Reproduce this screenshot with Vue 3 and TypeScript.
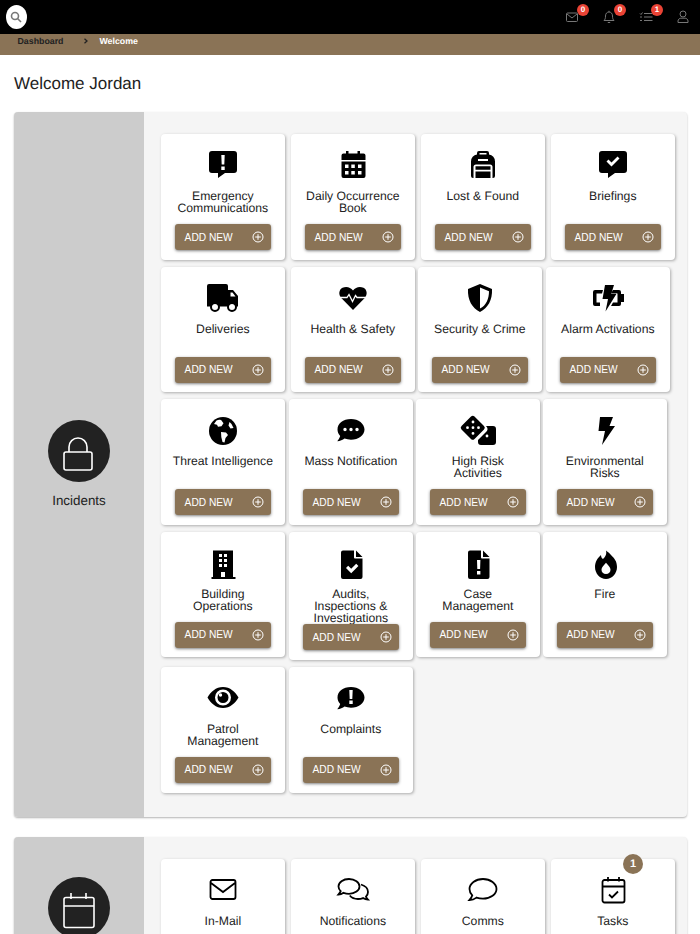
<script setup lang="ts">
interface Icon {
  black?: string
  white?: string
  whiteLine?: string
  line?: string
}

interface Tile {
  label: string
  icon: Icon
  gap?: 's' | 'xs'
  narrow?: boolean
  count?: number
}

const box = 'M5 2h22a3 3 0 0 1 3 3v16a3 3 0 0 1-3 3h-9l-7 5v-5H5a3 3 0 0 1-3-3V5a3 3 0 0 1 3-3z'
const bubble =
  'M16 5C8 5 2.5 9.5 2.5 15.5c0 2.6 1 4.7 2.7 6.4-.6 2.2-2 4-3 5.3 3 0 5.6-1.3 7.3-2.6 2 .7 4.2 1.1 6.5 1.1 7.5 0 13.5-4.5 13.5-10.2S23.5 5 16 5z'
const doc =
  'M8 3.5h11v7a1 1 0 0 0 1 1h7.5V30a2 2 0 0 1-2 2H8a2 2 0 0 1-2-2V5.5a2 2 0 0 1 2-2z M21 3.5l6.5 6.5H21z'
const dot = (x: number, y: number, r = 1.7) =>
  `M${x - r} ${y}a${r} ${r} 0 1 0 ${r * 2} 0 ${r} ${r} 0 1 0-${r * 2} 0z`

const incidents: Tile[] = [
  { label: 'Emergency Communications', icon: { black: `${box} M14.3 6h3.4l-.4 9.5h-2.6z M14.3 17.5h3.4v3.4h-3.4z` } },
  {
    label: 'Daily Occurrence Book',
    icon: {
      black:
        'M9 2h2.5v2.5h9V2H23v2.5h3.5a2 2 0 0 1 2 2V11h-24V6.5a2 2 0 0 1 2-2H9z M4.5 12.5h24V27a2 2 0 0 1-2 2h-20a2 2 0 0 1-2-2z M8 15.5h3.5V19H8z M14.3 15.5h3.5V19h-3.5z M21 15.5h3.5V19H21z M8 22h3.5v3.5H8z M14.3 22h3.5v3.5h-3.5z M21 22h3.5v3.5H21z'
    }
  },
  {
    label: 'Lost & Found',
    icon: {
      black:
        'M12 2h8a2 2 0 0 1 2 2v1.5a7 7 0 0 1 6 7V27a2 2 0 0 1-2 2H6a2 2 0 0 1-2-2V12.5a7 7 0 0 1 6-7V4a2 2 0 0 1 2-2z M12.5 4h7v1.4h-7z M11 10h10v2H11z M6.5 29V18A2.5 2.5 0 0 1 9 15.5h14a2.5 2.5 0 0 1 2.5 2.5V29z M8.5 17.3h15v3.5h-15z M8.5 22.5h15V29h-15z'
    }
  },
  { label: 'Briefings', icon: { black: `${box} M9.5 12.5l2-2 3 3 6-6 2 2-8 8z` } },
  {
    label: 'Deliveries',
    icon: {
      black: 'M2 2h17a2 2 0 0 1 2 2v4h5l5 6v10.5H0V4a2 2 0 0 1 2-2z',
      white: `M23.5 10.5h2l3 4h-5z ${dot(8, 25, 3.2)} ${dot(25, 25, 3.2)}`,
      line: `${dot(8, 25, 4)} ${dot(25, 25, 4)}`
    }
  },
  {
    label: 'Health & Safety',
    icon: {
      black:
        'M16 28L4.5 16.3C1 12.8 2 7.5 5.5 5.8 9.5 4 13.5 5.3 16 8.5 18.5 5.3 22.5 4 26.5 5.8 30 7.5 31 12.8 27.5 16.3z',
      whiteLine: 'M2 15.5h8l2-3 3.5 7 3-6 1.5 2h10'
    },
    gap: 'xs'
  },
  {
    label: 'Security & Crime',
    icon: {
      black: 'M16 2L28 7C28.5 18 24 26 16 30 8 26 3.5 18 4 7z M16 5.5L25 9.2C25 17 22 23.5 16 26.6z'
    },
    gap: 's'
  },
  {
    label: 'Alarm Activations',
    icon: {
      black:
        'M11 8H3a2 2 0 0 0-2 2v12a2 2 0 0 0 2 2h5v-3.5H4.5v-9H10z M21 8h6a2 2 0 0 1 2 2v2h3v8h-3v2a2 2 0 0 1-2 2h-8l2-3.5h4.5v-9H19z M13 3h9l-2.5 8H25L13.5 29.5 16 17h-5.5z'
    }
  },
  {
    label: 'Threat Intelligence',
    icon: {
      black: dot(16, 17, 14),
      white:
        'M9.5 6.5c2.5-1.2 5-.8 5.5.8l1.5 2-2 3-3.5.5-1-2-3-.8z M14 18l5 .5 2 2.5-2.5 3-1 4.5-2-.5-1.2-5z M22.5 8l2 2 2 4-3 .5-2-3z'
    },
    gap: 's'
  },
  {
    label: 'Mass Notification',
    icon: { black: `${bubble} ${dot(10, 15.5)} ${dot(16, 15.5)} ${dot(22, 15.5)}` },
    gap: 'xs'
  },
  {
    label: 'High Risk Activities',
    icon: {
      black: `M9 2.5a2.5 2.5 0 0 1 3.5 0l9.5 9.5a2.5 2.5 0 0 1 0 3.5L12.5 25a2.5 2.5 0 0 1-3.5 0L-.5 15.5a2.5 2.5 0 0 1 0-3.5z ${dot(11, 8, 1.4)} ${dot(5.5, 13.7, 1.4)} ${dot(11, 13.7, 1.4)} ${dot(16.5, 13.7, 1.4)} ${dot(11, 19.4, 1.4)} M24 12h7a3 3 0 0 1 3 3v13a3 3 0 0 1-3 3H19a3 3 0 0 1-3-3v-2l8.5-8.5c1.5-1.5 1.5-3.5-.5-5.5z ${dot(25, 22, 1.4)}`
    },
    gap: 'xs'
  },
  { label: 'Environmental Risks', icon: { black: 'M11 3h13l-3.5 9H26L13 31l3-14H9.5z' } },
  {
    label: 'Building Operations',
    icon: {
      black:
        'M6 3.5h20V30h2.5v2h-24v-2H6z M12 7h3v3h-3z M17 7h3v3h-3z M12 12h3v3h-3z M17 12h3v3h-3z M12 17h3v3h-3z M17 17h3v3h-3z M14 25h4v5h-4z'
    },
    gap: 's'
  },
  {
    label: 'Audits, Inspections & Investigations',
    icon: { black: `${doc} M11 21l2.2-2.2 3 3 5-5 2.2 2.2-7.2 7.2z` },
    gap: 'xs',
    narrow: true
  },
  {
    label: 'Case Management',
    icon: { black: `${doc} M15 13h3.4l-.3 9h-2.8z M15 24h3.4v3.4H15z` },
    gap: 'xs'
  },
  {
    label: 'Fire',
    icon: {
      black:
        'M17 3.5c1 4-1 6.5-3 8.5-1.5-1-2-2.5-2-4C8.5 11 6 15 6 20c0 6.5 5 12 11 12s11-5.5 11-12c0-6-3-9-6-12-1-1.5-3-3-5-4.5z M17 27c-2.7 0-4.5-1.9-4.5-4.3 0-2.6 2-4 4.5-7 2.5 3 4.5 4.4 4.5 7 0 2.4-1.8 4.3-4.5 4.3z'
    }
  },
  {
    label: 'Patrol Management',
    icon: {
      black: `M16 5C9 5 3.5 10 .5 15.5c3 5.5 8.5 10.5 15.5 10.5s12.5-5 15.5-10.5C28.5 10 23 5 16 5z ${dot(16, 15.5, 8)} ${dot(16, 15.5, 5.5)} ${dot(13.5, 13, 1.7)}`
    },
    gap: 's'
  },
  {
    label: 'Complaints',
    icon: { black: `${bubble} M14.3 8h3.4l-.4 9h-2.6z M14.3 18.5h3.4v3.4h-3.4z` },
    gap: 's'
  }
]

const comms: Tile[] = [
  { label: 'In-Mail', icon: { line: 'M5.5 6h21a2 2 0 0 1 2 2v15a2 2 0 0 1-2 2h-21a2 2 0 0 1-2-2V8a2 2 0 0 1 2-2z M4 9l12 9 12-9' } },
  {
    label: 'Notifications',
    icon: {
      line: 'M12 5C6 5 1.5 8.5 1.5 12.5c0 1.8 1 3.5 2.2 4.7-.5 1.2-1.4 2.5-2.2 3.3 2 0 3.7-.8 5-1.7 1.7.6 3.5 1 5.5 1 6 0 10.5-3.5 10.5-7.3S18 5 12 5z M24 10.5c4 1.2 7 4 7 7.5 0 1.8-.8 3.3-2 4.6.4 1.2 1.3 2.4 2 3.1-2 0-3.7-.7-5-1.6-1.5.6-3 .9-5 .9-3.3 0-6.5-1.4-8.2-3.5'
    }
  },
  {
    label: 'Comms',
    icon: {
      line: 'M16 5C8.5 5 2.5 9.5 2.5 15c0 2.5 1 4.6 2.8 6.3-.6 2-1.8 3.7-2.8 4.7 3 0 5.4-1.2 7-2.4 2 .7 4.2 1.1 6.5 1.1 7.5 0 13.5-4.5 13.5-9.7S23.5 5 16 5z'
    }
  },
  {
    label: 'Tasks',
    icon: {
      line: 'M7.5 6h18a2 2 0 0 1 2 2v18.5a2 2 0 0 1-2 2h-18a2 2 0 0 1-2-2V8a2 2 0 0 1 2-2z M5.5 12.5h22 M11 3v4.5 M22 3v4.5 M12 20.5l3 3 6-6'
    },
    count: 1
  }
]
</script>

<template>
  <div class="page">
    <header class="topbar">
      <button class="search" aria-label="Search">
        <svg width="12" height="12" viewBox="0 0 12 12" fill="none" stroke="#777" stroke-width="1.6">
          <circle cx="5" cy="5" r="3.5" />
          <path d="M7.5 7.5L11 11" />
        </svg>
      </button>
      <div class="tools">
        <span class="tool">
          <svg width="14" height="12" viewBox="0 0 14 12" fill="none" stroke="#777">
            <rect x="1.5" y="2" width="11" height="8.5" rx="1" />
            <path d="M2 3l5 4 5-4" />
          </svg>
          <b class="badge">0</b>
        </span>
        <span class="tool">
          <svg width="14" height="14" viewBox="0 0 14 14" fill="none" stroke="#777">
            <path d="M2 10.5c1-1 1.5-2 1.5-4.500S5 2 7 2s3.500 1.500 3.500 4 .5 3.500 1.500 4.500z M5.800 12.500h2.400 M7 .8V2" />
          </svg>
          <b class="badge">0</b>
        </span>
        <span class="tool">
          <svg width="14" height="12" viewBox="0 0 14 12" fill="none" stroke="#777">
            <path d="M5 2.5h8.5 M5 6h8.5 M5 9.5h8.5 M1 2.5l1 1 1.5-2 M1 6h2 M1 9.5h2" />
          </svg>
          <b class="badge">1</b>
        </span>
        <span class="tool">
          <svg width="14" height="14" viewBox="0 0 14 14" fill="none" stroke="#777">
            <circle cx="7" cy="4" r="3" />
            <path d="M2 12.5V11c0-1.5 1.5-2.8 2.8-2.8h4.4c1.3 0 2.800 1.300 2.800 2.800v1.500z" />
          </svg>
        </span>
      </div>
    </header>

    <nav class="crumbs">
      <span class="crumb">Dashboard</span>
      <svg class="chevron" width="6" height="6" viewBox="0 0 6 6" fill="none" stroke="#222" stroke-width="1.3">
        <path d="M1.5 .8L4 3 1.5 5.2" />
      </svg>
      <span class="crumb current">Welcome</span>
    </nav>

    <h1 class="title">Welcome Jordan</h1>

    <section class="group">
      <aside class="side">
        <span class="disc">
          <svg width="62" height="62" viewBox="0 0 62 62" fill="none" stroke="#fff" stroke-width="1.6">
            <rect x="16" y="32" width="28" height="18" rx="2" />
            <path d="M21 32v-5a9 9 0 0 1 18 0v5" />
          </svg>
        </span>
        <span class="side-label">Incidents</span>
      </aside>
      <div class="tiles">
        <article v-for="t in incidents" :key="t.label" class="tile" :class="t.gap && `gap-${t.gap}`">
          <svg class="glyph" width="32" height="32" viewBox="0 0 32 32">
            <path v-if="t.icon.black" :d="t.icon.black" fill="#000" fill-rule="evenodd" />
            <path v-if="t.icon.white" :d="t.icon.white" fill="#fff" />
            <path v-if="t.icon.whiteLine" :d="t.icon.whiteLine" fill="none" stroke="#fff" stroke-width="1.3" />
            <path v-if="t.icon.line" :d="t.icon.line" fill="none" stroke="#000" stroke-width="2" />
          </svg>
          <div class="tile-label" :class="{ narrow: t.narrow }">{{ t.label }}</div>
          <button class="add">
            <span>ADD NEW</span>
            <svg width="12" height="12" viewBox="0 0 12 12" fill="none" stroke="#fff">
              <circle cx="6" cy="6" r="5" />
              <path d="M6 3.2v5.6 M3.2 6h5.6" />
            </svg>
          </button>
        </article>
      </div>
    </section>

    <section class="group">
      <aside class="side">
        <span class="disc">
          <svg width="62" height="62" viewBox="0 0 62 62" fill="none" stroke="#fff" stroke-width="1.6">
            <rect x="16" y="20.5" width="30" height="30" rx="2" />
            <path d="M16 29h30 M23 16v6 M38 16v6" />
          </svg>
        </span>
        <span class="side-gap" />
      </aside>
      <div class="tiles compact">
        <article v-for="t in comms" :key="t.label" class="tile">
          <svg class="glyph" width="32" height="32" viewBox="0 0 32 32">
            <path v-if="t.icon.line" :d="t.icon.line" fill="none" stroke="#000" stroke-width="1.8" />
          </svg>
          <div class="tile-label">{{ t.label }}</div>
          <span v-if="t.count" class="count">{{ t.count }}</span>
        </article>
      </div>
    </section>
  </div>
</template>

<style>
html,
body {
  margin: 0;
  background: #fff;
}
</style>

<style scoped>
.page {
  height: 934px;
  overflow: hidden;
  font-family: 'Liberation Sans', Arial, sans-serif;
  color: #222;
  text-rendering: geometricPrecision;
}

.topbar {
  display: flex;
  align-items: center;
  justify-content: space-between;
  height: 34px;
  padding: 0 5px 0 5.5px;
  background: #000;
}

.search {
  display: flex;
  align-items: center;
  justify-content: center;
  width: 21px;
  height: 24px;
  padding: 0;
  border: none;
  border-radius: 50%;
  background: #fff;
}

.tools {
  display: flex;
  gap: 13px;
}

.tool {
  position: relative;
  display: flex;
  align-items: center;
  justify-content: center;
  width: 24px;
  height: 24px;
}

.badge {
  position: absolute;
  top: -1px;
  right: -5px;
  width: 12px;
  height: 12px;
  border-radius: 50%;
  background: #ea4335;
  color: #fff;
  font-size: 8px;
  line-height: 12px;
  text-align: center;
}

.crumbs {
  display: flex;
  align-items: center;
  height: 20.5px;
  padding: 0 0 6px 17.5px;
  box-sizing: border-box;
  background: #8a7356;
  font-size: 8.8px;
  font-weight: 700;
}

.chevron {
  margin: 0 10px 0 20px;
}

.current {
  color: #fff;
}

.title {
  margin: 0;
  padding: 19.5px 14px 18.5px;
  font-size: 17px;
  font-weight: 400;
  line-height: 19.5px;
}

.group {
  display: flex;
  margin: 0 13px 20px 14px;
  border-radius: 4px;
  overflow: hidden;
  background: #f5f5f5;
  box-shadow: 0 1px 2px rgba(0, 0, 0, 0.3);
}

.side {
  display: flex;
  flex: 0 0 130px;
  flex-direction: column;
  align-items: center;
  justify-content: center;
  background: #ccc;
}

.disc {
  width: 62px;
  height: 62px;
  border-radius: 50%;
  background: #222;
}

.disc svg {
  display: block;
}

.side-label {
  margin-top: 11px;
  font-size: 13.4px;
  line-height: 16px;
}

.side-gap {
  height: 27px;
}

.tiles {
  display: flex;
  flex: 1;
  flex-wrap: wrap;
  align-items: flex-start;
  align-content: flex-start;
  gap: 7px 0;
  padding: 22px 0 24.4px 17px;
}

.tiles.compact {
  padding-bottom: 22px;
}

.tile {
  position: relative;
  display: flex;
  flex-direction: column;
  box-sizing: border-box;
  width: 123.7px;
  min-height: 125.6px;
  margin-right: 6.3px;
  padding: 15px 13.6px 9.6px;
  border-radius: 4px;
  background: #fff;
  box-shadow: 1px 1px 3px rgba(0, 0, 0, 0.3);
}

.gap-s {
  margin-right: 4.3px;
}

.gap-xs {
  margin-right: 3.3px;
}

.glyph {
  display: block;
  align-self: center;
  flex: none;
  overflow: visible;
}

.tile-label {
  min-height: 34px;
  margin: 9px -3px 0;
  font-size: 12.2px;
  line-height: 12.2px;
  text-align: center;
}

.tile-label.narrow {
  margin: 9px 0 0;
}

.add {
  display: flex;
  align-items: center;
  justify-content: space-between;
  width: 100%;
  height: 26px;
  padding: 0 7px 0 10px;
  border: none;
  border-radius: 3px;
  background: #8a7356;
  box-shadow: 0 1px 3px rgba(0, 0, 0, 0.5);
  color: #fff;
  font-family: inherit;
  font-size: 10.2px;
}

.count {
  position: absolute;
  top: -5px;
  right: 31.5px;
  width: 20px;
  height: 20px;
  border-radius: 50%;
  background: #8a7356;
  color: #fff;
  font-size: 11px;
  font-weight: 700;
  line-height: 20px;
  text-align: center;
}
</style>
